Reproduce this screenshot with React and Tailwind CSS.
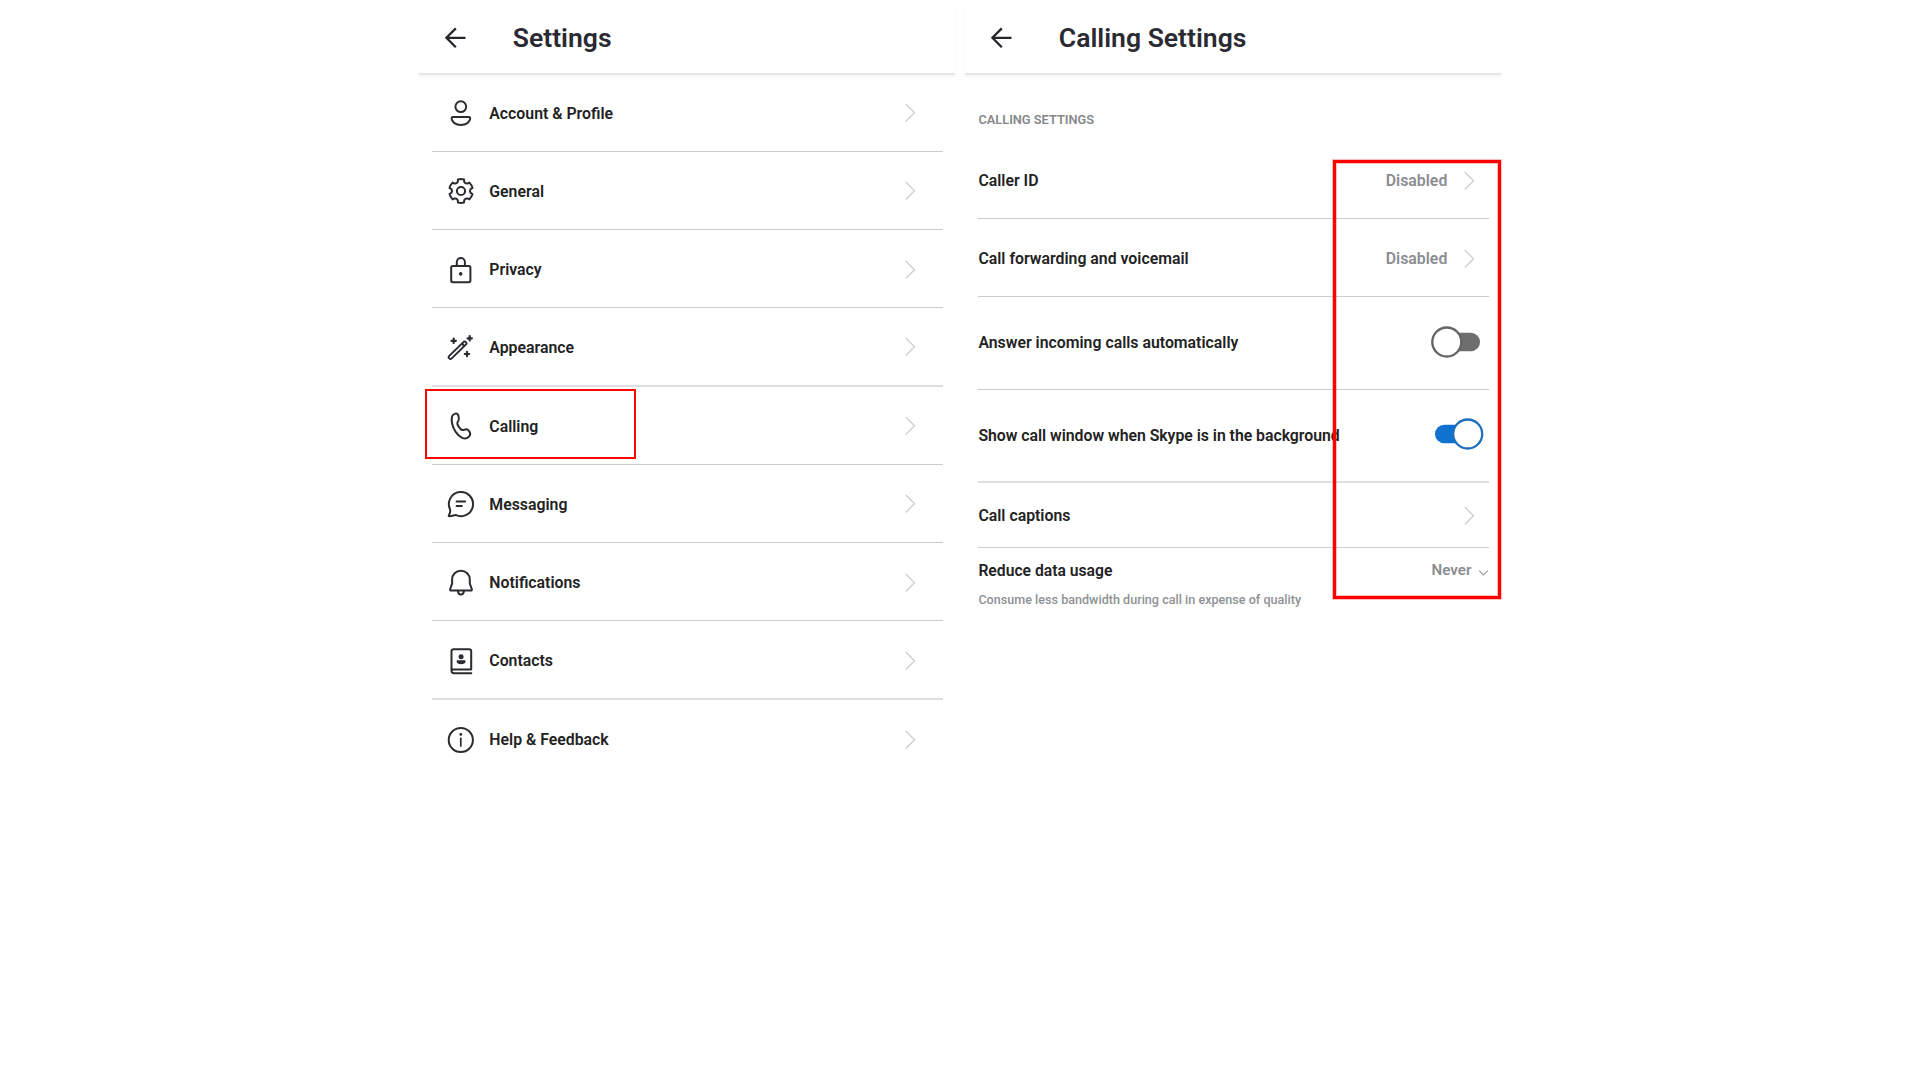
import React from "react";

// Six-toothed gear outline centred on (15, 15).
const gearPath = (() => {
  const p = (r, deg) => {
    const a = (deg * Math.PI) / 180;
    return `${(15 + r * Math.cos(a)).toFixed(2)} ${(15 + r * Math.sin(a)).toFixed(2)}`;
  };
  let d = "";
  for (let k = 0; k < 6; k++) {
    const c = k * 60 - 90;
    d += `${k === 0 ? "M" : "L"}${p(11.9, c - 15)}A12 12 0 0 1 ${p(11.9, c + 15)}L${p(9.8, c + 19)}Q${p(8.3, c + 30)} ${p(9.8, c + 41)}`;
  }
  return d + "Z";
})();

function Icon({ children }) {
  return (
    <svg
      className="h-[30px] w-[30px] shrink-0"
      viewBox="0 0 30 30"
      fill="none"
      stroke="#2b2b30"
      strokeWidth="2"
      strokeLinecap="round"
      strokeLinejoin="round"
    >
      {children}
    </svg>
  );
}

const icons = {
  user: (
    <Icon>
      <circle cx="14.8" cy="8.7" r="5.4" />
      <path d="M6.9 19h16c.8 0 1.3.5 1.3 1.3 0 3.9-4.2 6.8-9.3 6.8s-9.3-2.9-9.3-6.8c0-.8.5-1.3 1.3-1.3z" />
    </Icon>
  ),
  gear: (
    <Icon>
      <path d={gearPath} />
      <circle cx="15" cy="15" r="4.1" />
    </Icon>
  ),
  lock: (
    <Icon>
      <rect x="5.2" y="11" width="19.2" height="16.2" rx="1.6" />
      <path d="M10.8 11V7a4.05 4.05 0 0 1 8.1 0v4" />
      <circle cx="14.7" cy="18.9" r="1.8" fill="#2b2b30" stroke="none" />
    </Icon>
  ),
  wand: (
    <Icon>
      <path d="M4.5 25.1 18.6 11.4" strokeWidth="5.5" />
      <path d="M4.5 25.1 15.9 14M18.4 11.6l.2-.2" stroke="#fff" strokeWidth="1.7" />
      <path d="M7.7 6.6v4.4M5.5 8.8h4.4M23.7 4.1v4.4M21.5 6.3h4.4M21 19.8v4.4M18.8 22h4.4" strokeWidth="2.2" />
    </Icon>
  ),
  phone: (
    <Icon>
      <path d="M9.3 2.6C11 2 12 3.2 12.5 5 13 7.3 13.3 8.6 12.4 9.8 11.3 11.1 10.9 11.6 11.3 12.9 12 15.2 13.6 17.2 15 18.4 16 19.2 16.8 19.3 18 18.8 19.5 18 20.9 17.8 22 18.9L23.4 20.6C24.6 22.1 24.3 23.9 23.2 25.4 21.5 27.6 18.8 27.9 16.2 26.8 11 24.5 7.3 18 6.2 13 5.5 9.7 5.6 7.2 6 5.6 6.5 3.8 7.6 3.1 9.3 2.6z" />
    </Icon>
  ),
  message: (
    <Icon>
      <path d="M3.9 20A12.1 12.1 0 1 1 9.5 25.9C8 26 5.5 27.4 3.2 27.2 2.6 27.1 2.6 26.7 3 26 4.2 24 4.6 22 3.9 20z" />
      <path d="M10.6 12.6h8.6M10.6 16.9h5.2" />
    </Icon>
  ),
  bell: (
    <Icon>
      <path d="M14.9 2.7c-5 0-8.8 3.9-8.8 8.8v4.2L4.2 21c-.3.9.1 1.6 1 1.6h19.6c.9 0 1.3-.7 1-1.6l-2-5.3v-4.2c0-4.9-3.9-8.8-8.9-8.8z" />
      <path d="M11.9 22.8c.2 2.4 1.4 3.7 3 3.7s2.8-1.3 3-3.7" />
    </Icon>
  ),
  contacts: (
    <Icon>
      <path d="M25.2 23.6V5.2a2 2 0 0 0-2-2H7.5a2 2 0 0 0-2 2v19.6A2.2 2.2 0 0 0 7.7 27.2h17.6M25.2 23.4H7.6a2 2 0 0 0-2 1.4" />
      <circle cx="15.1" cy="10.8" r="2.5" fill="#2b2b30" stroke="none" />
      <path d="M11.6 14.3h7c.6 0 1 .4 1 1 0 1.8-2 3-4.5 3s-4.5-1.2-4.5-3c0-.6.4-1 1-1z" fill="#2b2b30" stroke="none" />
    </Icon>
  ),
  info: (
    <Icon>
      <circle cx="14.8" cy="15" r="12.1" />
      <circle cx="14.8" cy="9.4" r="1.4" fill="#2b2b30" stroke="none" />
      <path d="M14.8 13.3v7.7" strokeWidth="1.7" />
    </Icon>
  ),
};

function Chevron() {
  return (
    <svg className="h-[20px] w-[11px] shrink-0" viewBox="0 0 11 20" fill="none" stroke="#cdd0d3" strokeWidth="1.4">
      <path d="M.8 1 9.5 9.7.8 18.4" />
    </svg>
  );
}

function Toggle({ on }) {
  return on ? (
    <svg className="h-[32px] w-[50px]" viewBox="0 0 50 32">
      <rect x="1" y="6.7" width="40" height="18.6" rx="9.3" fill="#1072cf" />
      <circle cx="33.7" cy="16" r="14.5" fill="#fff" stroke="#1d6fba" strokeWidth="2.3" />
    </svg>
  ) : (
    <svg className="h-[32px] w-[50px]" viewBox="0 0 50 32">
      <rect x="8" y="6.7" width="41" height="18.6" rx="9.3" fill="#6e6e6e" />
      <circle cx="15.8" cy="16" r="14.5" fill="#fff" stroke="#666666" strokeWidth="2.4" />
    </svg>
  );
}

function Header({ title }) {
  return (
    <header className="flex h-[75.4px] items-center border-b-2 border-[#e6e6e6] pl-[25.3px] pt-[2.6px] shadow-[0_2px_2px_rgba(0,0,0,0.04)]">
      <svg className="h-[24px] w-[24px]" viewBox="0 0 24 24" fill="none" stroke="#25252d" strokeWidth="2.3">
        <path d="M21.5 11.8H2.8M11.8 2.4 2.4 11.8l9.4 9.4" />
      </svg>
      <h1 className="ml-[44.5px] pt-px text-[26.55px] font-semibold leading-none text-[#2a2a32]">{title}</h1>
    </header>
  );
}

const menu = [
  { icon: "user", label: "Account & Profile" },
  { icon: "gear", label: "General" },
  { icon: "lock", label: "Privacy" },
  { icon: "wand", label: "Appearance", soft: true },
  { icon: "phone", label: "Calling", marked: true },
  { icon: "message", label: "Messaging" },
  { icon: "bell", label: "Notifications" },
  { icon: "contacts", label: "Contacts", soft: true },
  { icon: "info", label: "Help & Feedback", last: true },
];

function Divider({ soft }) {
  return soft ? <div className="h-[2px] shrink-0 bg-[#dde0e0]" /> : <div className="h-px shrink-0 bg-[#cacdce]" />;
}

function MenuRow({ icon, label, soft, marked, last }) {
  return (
    <li className="relative flex h-[78.27px] flex-col">
      <div className="flex flex-1 items-center pl-[14px] pr-[27.5px] pt-[2px]">
        {icons[icon]}
        <span className="ml-[13.3px] flex-1 pt-[0.8px] leading-none">{label}</span>
        <Chevron />
      </div>
      {!last && <Divider soft={soft} />}
      {marked && <div className="absolute -left-[7px] top-[2px] h-[70px] w-[211px] border-2 border-[#fb0507]" />}
    </li>
  );
}

function SettingRow({ label, className, soft, children }) {
  return (
    <li className={"flex flex-col " + className}>
      <div className="flex flex-1 items-center">
        <span className="flex-1 whitespace-nowrap leading-none">{label}</span>
        {children}
      </div>
      <Divider soft={soft} />
    </li>
  );
}

function Disabled() {
  return (
    <div className="mr-[14px] flex items-center gap-[16.7px] text-[#8b8d91]">
      <span className="leading-none">Disabled</span>
      <Chevron />
    </div>
  );
}

export default function App() {
  return (
    <div className="flex h-[1080px] w-[1920px] gap-[10px] bg-white pl-[419px] font-[Roboto,sans-serif] text-[15.83px] font-semibold text-[#222222]">
      <section className="w-[536px]">
        <Header title="Settings" />
        <ul className="-mt-[1.88px] pl-[13px] pr-[12px]">
          {menu.map((m) => (
            <MenuRow key={m.label} {...m} />
          ))}
        </ul>
      </section>

      <section className="relative w-[536px]">
        <Header title="Calling Settings" />
        <div className="pl-[13.4px] pr-[12px]">
          <h2 className="flex h-[65.6px] items-center pt-[24.5px] text-[12.8px] leading-none text-[#85878b]">
            CALLING SETTINGS
          </h2>
          <ul>
            <SettingRow label="Caller ID" className="h-[78px] pt-[2.2px]">
              <Disabled />
            </SettingRow>
            <SettingRow label="Call forwarding and voicemail" className="h-[78px] pt-[2.2px]">
              <Disabled />
            </SettingRow>
            <SettingRow label="Answer incoming calls automatically" className="h-[93px]">
              <div className="mr-[8px] pb-[2px]">
                <Toggle />
              </div>
            </SettingRow>
            <SettingRow
              label="Show call window when Skype is in the background"
              className="h-[93px] tracking-[-0.03px]"
              soft
            >
              <div className="mr-[5px] pb-[2.6px]">
                <Toggle on />
              </div>
            </SettingRow>
            <SettingRow label="Call captions" className="h-[65px] pt-[1.6px]">
              <div className="mr-[14px]">
                <Chevron />
              </div>
            </SettingRow>
          </ul>
          <div className="mt-[14px] flex h-[18px] items-center">
            <span className="flex-1 text-[15.7px] leading-none">Reduce data usage</span>
            <span className="text-[15.2px] leading-none text-[#8b8d91]">Never</span>
            <svg className="ml-[6px] mr-[0.5px] mt-[4px] h-[8px] w-[11px]" viewBox="0 0 11 8" fill="none" stroke="#9a9ca0" strokeWidth="1.2">
              <path d="M1.2 1.6 5.5 6l4.3-4.4" />
            </svg>
          </div>
          <p className="mt-[14px] text-[12.6px] font-medium leading-none text-[#8f9194]">
            Consume less bandwidth during call in expense of quality
          </p>
        </div>
        <div className="absolute left-[368px] top-[160px] h-[439px] w-[168px] border-[3px] border-[#fe0000] shadow-[0_0_0_1px_rgba(254,0,0,0.25),inset_0_0_0_1px_rgba(254,0,0,0.25)]" />
      </section>
    </div>
  );
}
